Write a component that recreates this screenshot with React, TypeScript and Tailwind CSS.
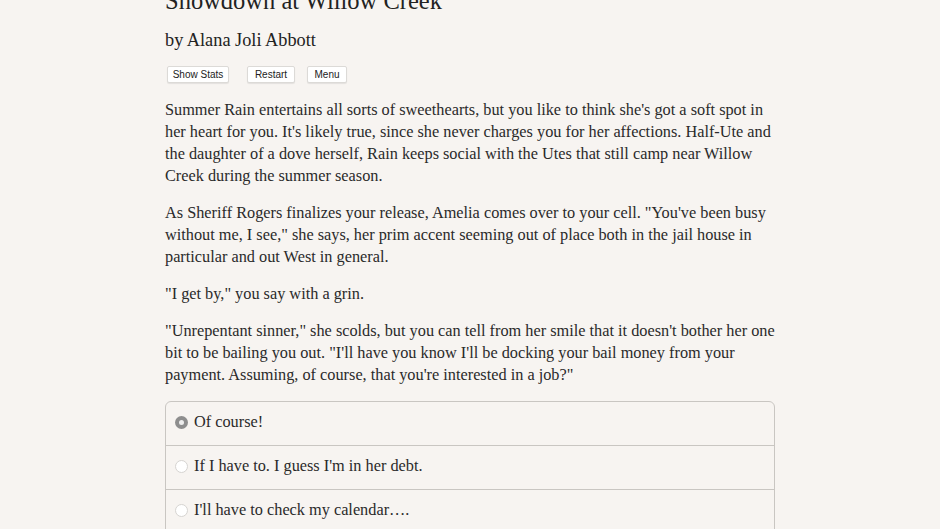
import React, { useState } from 'react';

const paragraphs: string[][] = [
  [
    "Summer Rain entertains all sorts of sweethearts, but you like to think she's got a soft spot in",
    "her heart for you. It's likely true, since she never charges you for her affections. Half-Ute and",
    'the daughter of a dove herself, Rain keeps social with the Utes that still camp near Willow',
    'Creek during the summer season.',
  ],
  [
    'As Sheriff Rogers finalizes your release, Amelia comes over to your cell. "You\'ve been busy',
    'without me, I see," she says, her prim accent seeming out of place both in the jail house in',
    'particular and out West in general.',
  ],
  ['"I get by," you say with a grin.'],
  [
    '"Unrepentant sinner," she scolds, but you can tell from her smile that it doesn\'t bother her one',
    'bit to be bailing you out. "I\'ll have you know I\'ll be docking your bail money from your',
    'payment. Assuming, of course, that you\'re interested in a job?"',
  ],
];

const choices = ['Of course!', "If I have to. I guess I'm in her debt.", "I'll have to check my calendar…."];

const buttons = [
  { label: 'Show Stats', cls: 'w-[62px]' },
  { label: 'Restart', cls: 'w-[48px] ml-[18px]' },
  { label: 'Menu', cls: 'w-[40px] ml-[12px]' },
];

export default function App() {
  const [selected, setSelected] = useState(0);

  return (
    <div className="min-h-screen bg-[#f7f4f1] text-[#2a2a2a] overflow-hidden" style={{ fontFamily: '"Liberation Serif", serif' }}>
      <div className="w-[610px] ml-[165px]">
        <h1 className="text-[24.5px] leading-[30px] mt-[-14px] text-[#222]">Showdown at Willow Creek</h1>
        <h2 className="text-[18.3px] leading-[24px] mt-[12px] text-[#222]">by Alana Joli Abbott</h2>

        <div className="flex items-center mt-[14px] ml-[2px]" style={{ fontFamily: '"Liberation Sans", sans-serif' }}>
          {buttons.map((b) => (
            <button
              key={b.label}
              className={`h-[17px] text-[10px] leading-none text-center bg-white border border-[#dcdad7] rounded-[2px] shadow-[0_1px_1px_rgba(0,0,0,0.08)] text-[#222] ${b.cls}`}
            >
              {b.label}
            </button>
          ))}
        </div>

        <div className="mt-[16px] text-[16.3px] leading-[22px]">
          {paragraphs.map((lines, i) => (
            <p key={i} className={i > 0 ? 'mt-[15px]' : ''}>
              {lines.map((line, j) => (
                <span key={j} className="block whitespace-nowrap">{line}</span>
              ))}
            </p>
          ))}
        </div>

        <div className="mt-[15px] border border-[#c9c6c2] rounded-t-[6px] text-[16.3px]">
          {choices.map((c, i) => (
            <label
              key={c}
              className={`flex items-center pl-[9px] pb-[2px] cursor-pointer ${i > 0 ? 'h-[44px] border-t border-[#c9c6c2]' : 'h-[43px]'}`}
              onClick={() => setSelected(i)}
            >
              {selected === i ? (
                <span className="w-[13px] h-[13px] rounded-full bg-[#8e8e8e] flex items-center justify-center">
                  <span className="w-[5px] h-[5px] rounded-full bg-[#eeeeee]" />
                </span>
              ) : (
                <span className="w-[13px] h-[13px] rounded-full bg-white border border-[#d6d4d1]" />
              )}
              <span className="ml-[6px]">{c}</span>
            </label>
          ))}
        </div>
      </div>
    </div>
  );
}
